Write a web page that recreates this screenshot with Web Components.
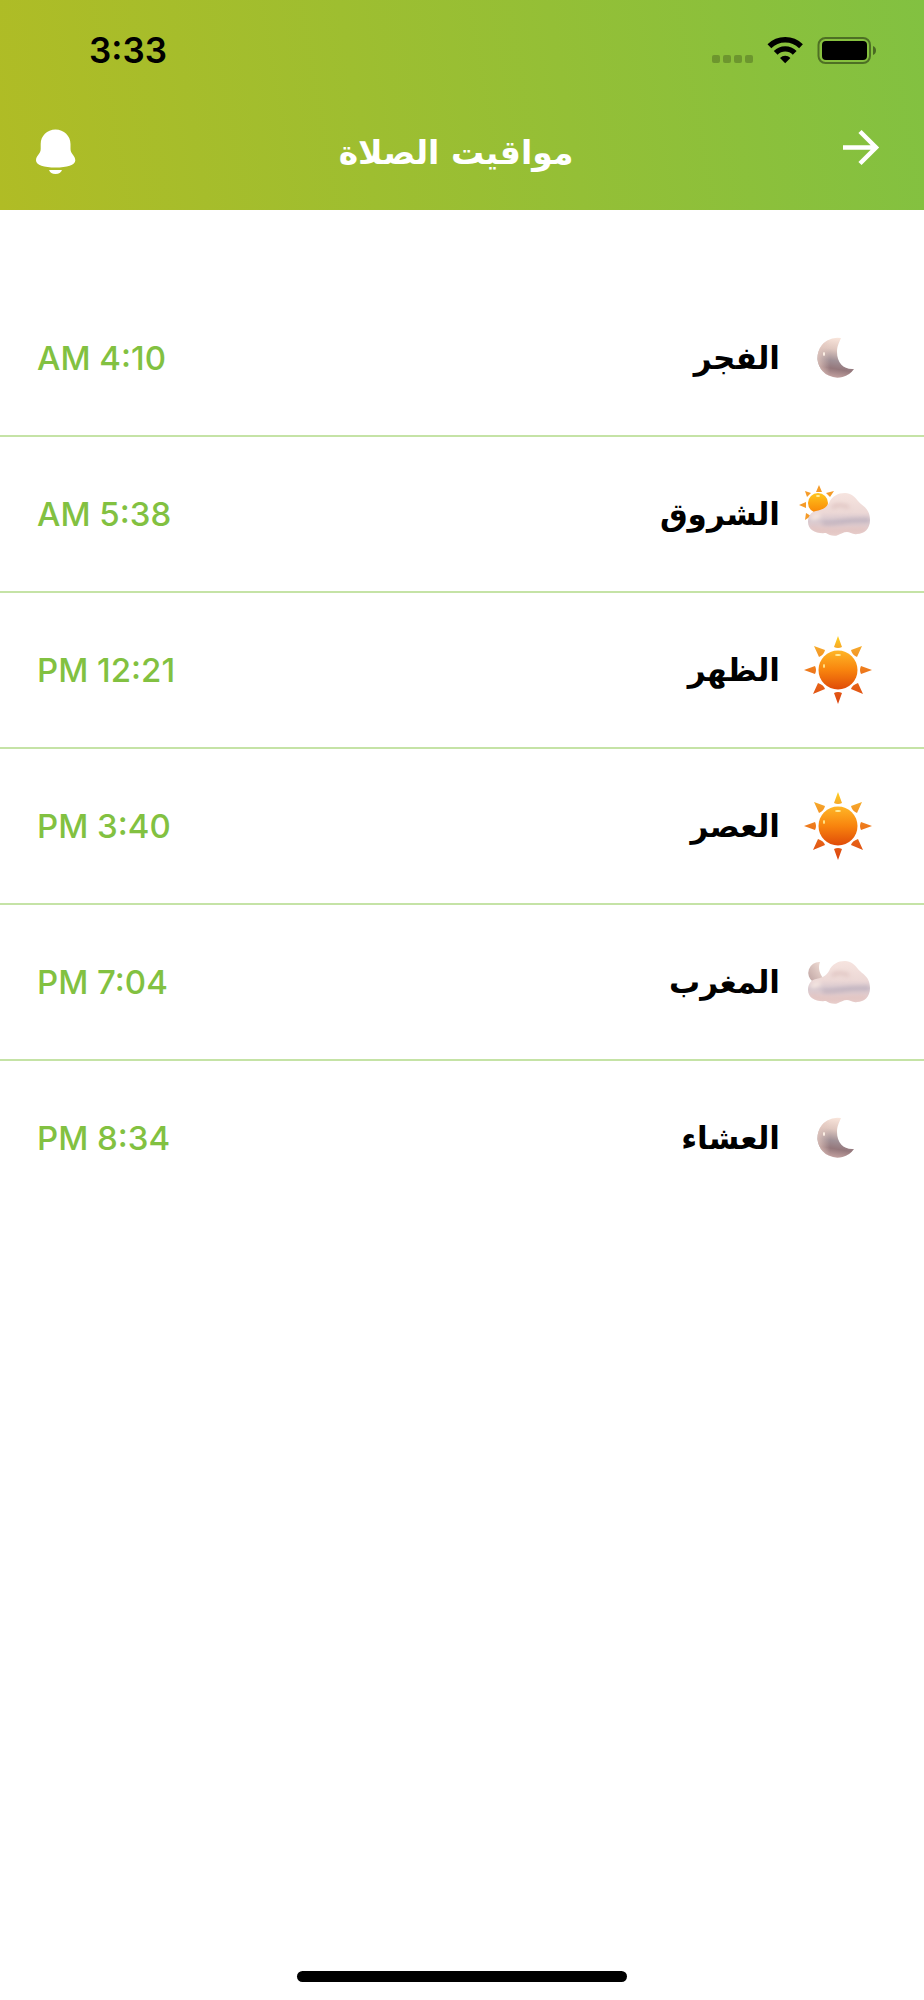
<!DOCTYPE html>
<html lang="ar" dir="rtl">
<head>
<meta charset="utf-8">
<meta name="viewport" content="width=device-width, initial-scale=1">
<title>مواقيت الصلاة</title>
<style>
  body {
    margin: 0;
    background: #fff;
    color: #000;
    font-family: "DejaVu Sans", sans-serif;
  }
</style>
</head>
<body>
<prayer-screen>
  <status-bar slot="header" time="3:33"></status-bar>
  <nav-header slot="header">مواقيت الصلاة</nav-header>
  <prayer-row icon="moon" time="AM 4:10">الفجر</prayer-row>
  <prayer-row icon="sunrise" time="AM 5:38">الشروق</prayer-row>
  <prayer-row icon="sun" time="PM 12:21">الظهر</prayer-row>
  <prayer-row icon="sun" time="PM 3:40">العصر</prayer-row>
  <prayer-row icon="dusk" time="PM 7:04">المغرب</prayer-row>
  <prayer-row icon="moon" time="PM 8:34">العشاء</prayer-row>
</prayer-screen>

<script>
const cloud = `
  <path fill="url(#cloud)" d="M10 48C10 42 13 38 18 37C24 36 28 34 31 29C34 22 40 19 47 19C53 19 57 23 60 27C64 32 72 34 72 46C72 55 66 60 59 60C55 61 52 58 49 58C45 58 43 60 40 61C36 63 31 61 28 59C18 60 10 56 10 48Z"/>
  <g clip-path="url(#cloud-clip)" fill="none" stroke-linecap="round" filter="url(#soft)">
    <path d="M35 33C39 30 46 31 50 33" stroke="#c9a5a2" stroke-width="3" opacity=".5"/>
    <path d="M26 49C36 51 44 45 70 46" stroke="#a99db0" stroke-width="4" opacity=".5"/>
    <path d="M14 54C24 60 52 56 66 56" stroke="#e0b9b6" stroke-width="4" opacity=".5"/>
    <path d="M15 44L20 42" stroke="#fff2ea" stroke-width="5" opacity=".7"/>
  </g>
`
const cloudDefs = `
  <linearGradient id="cloud" x1="0" y1="0" x2="0" y2="1">
    <stop offset="0" stop-color="#f6e4df"/>
    <stop offset=".45" stop-color="#ecd8d6"/>
    <stop offset=".65" stop-color="#d6c7ce"/>
    <stop offset=".82" stop-color="#e3cccc"/>
    <stop offset="1" stop-color="#e9d0cd"/>
  </linearGradient>
  <clipPath id="cloud-clip"><path d="M10 48C10 42 13 38 18 37C24 36 28 34 31 29C34 22 40 19 47 19C53 19 57 23 60 27C64 32 72 34 72 46C72 55 66 60 59 60C55 61 52 58 49 58C45 58 43 60 40 61C36 63 31 61 28 59C18 60 10 56 10 48Z"/></clipPath>
  <filter id="soft" filterUnits="userSpaceOnUse" x="0" y="0" width="80" height="80"><feGaussianBlur stdDeviation="2"/></filter>
`

const icons = {
  moon: `
    <defs>
      <linearGradient id="moon" x1=".6" y1="0" x2=".45" y2="1">
        <stop offset="0" stop-color="#fae6dc"/>
        <stop offset=".3" stop-color="#e0c8c0"/>
        <stop offset=".58" stop-color="#a09096"/>
        <stop offset=".78" stop-color="#94777b"/>
        <stop offset="1" stop-color="#c4a3a2"/>
      </linearGradient>
      <linearGradient id="rim" x1="0" x2="1">
        <stop offset="0" stop-color="#e5c9c0" stop-opacity=".8"/>
        <stop offset=".35" stop-color="#e5c9c0" stop-opacity="0"/>
      </linearGradient>
    </defs>
    <path fill="url(#moon)" d="M43 20A20 20 0 1 0 56 51C46 52 39 45 39 34C39 28 41 25 43 20Z"/>
    <path fill="url(#rim)" d="M43 20A20 20 0 1 0 56 51C46 52 39 45 39 34C39 28 41 25 43 20Z"/>
    <ellipse cx="26" cy="36" rx="1" ry="2" fill="#fff3e8"/>
  `,
  sun: `
    <defs>
      <linearGradient id="rays" gradientUnits="userSpaceOnUse" x1="0" y1="6" x2="0" y2="74">
        <stop offset="0" stop-color="#ffd21f"/>
        <stop offset=".2" stop-color="#f5a22a"/>
        <stop offset=".5" stop-color="#ee7a1c"/>
        <stop offset="1" stop-color="#dc4410"/>
      </linearGradient>
      <linearGradient id="disc" x1="0" y1="0" x2="0" y2="1">
        <stop offset="0" stop-color="#ffb626"/>
        <stop offset=".5" stop-color="#f8840e"/>
        <stop offset="1" stop-color="#e04b08"/>
      </linearGradient>
    </defs>
    <path fill="url(#rays)" d="M40 6L44 17Q40 19 36 17ZM40 74L36 63Q40 61 44 63ZM6 40L17 36Q19 40 17 44ZM74 40L63 44Q61 40 63 36ZM16 16L27 20Q26 25 21 27ZM64 16L59 27Q54 25 53 20ZM15 64L20 53Q26 55 27 59ZM65 64L53 59Q54 55 60 53Z"/>
    <circle cx="40" cy="40" r="19.500" fill="url(#disc)"/>
    <ellipse cx="40" cy="25" rx="3" ry="1" fill="#fff0a0"/>
    <ellipse cx="26" cy="36" rx="1" ry="2" fill="#ffe890"/>
  `,
  sunrise: `
    <defs>
      ${cloudDefs}
      <linearGradient id="small-sun" x1="0" y1="0" x2="0" y2="1">
        <stop offset="0" stop-color="#ffc61c"/>
        <stop offset="1" stop-color="#f98607"/>
      </linearGradient>
    </defs>
    <path fill="#f59b28" d="M21 11L24 18H18ZM36 17L32 23L28 19ZM7 17L13 19L9 23ZM1 31L8 28V34ZM7 46L8 39L13 42Z"/>
    <circle cx="20" cy="29" r="10" fill="url(#small-sun)"/>
    <ellipse cx="20" cy="22" rx="2" ry="1" fill="#fff0a0"/>
    ${cloud}
  `,
  dusk: `
    <defs>
      ${cloudDefs}
      <linearGradient id="small-moon" x1="1" y1="0" x2="0" y2="1">
        <stop offset="0" stop-color="#f5e2da"/>
        <stop offset="1" stop-color="#bda2a0"/>
      </linearGradient>
    </defs>
    <path fill="url(#small-moon)" d="M22 20A11 11 0 0 0 15 40L25 36C21 31 20 25 22 20Z"/>
    ${cloud}
  `
}

class PrayerScreen extends HTMLElement {
  constructor () {
    super()
    this.attachShadow({mode: 'open'}).innerHTML = `
      <style>
        :host {
          display: flex;
          flex-direction: column;
          min-height: 100vh;
        }
        header {
          padding-bottom: 10px;
          background: linear-gradient(80deg, #b0bc25, #82c141);
        }
        main {
          flex: 1;
          padding-top: 71px;
        }
        .indicator {
          align-self: center;
          width: 330px;
          height: 11px;
          margin-bottom: 18px;
          border-radius: 6px;
          background: #000;
        }
      </style>
      <header><slot name="header"></slot></header>
      <main role="list"><slot></slot></main>
      <div class="indicator"></div>
    `
  }
}

class StatusBar extends HTMLElement {
  constructor () {
    super()
    this.attachShadow({mode: 'open'}).innerHTML = `
      <style>
        :host {
          display: flex;
          justify-content: space-between;
          align-items: center;
          direction: ltr;
          height: 100px;
          padding: 0 46px 0 89px;
          font: 600 35px/44px Inter, sans-serif;
        }
        svg { display: block; }
      </style>
      <time>${this.getAttribute('time')}</time>
      <svg width="168" height="32" viewBox="0 0 168 32" aria-hidden="true">
        <g fill-opacity=".22">
          <rect x="2" y="21" width="8" height="8" rx="2"/>
          <rect x="13" y="21" width="8" height="8" rx="2"/>
          <rect x="24" y="21" width="8" height="8" rx="2"/>
          <rect x="35" y="21" width="8" height="8" rx="2"/>
        </g>
        <g fill="none" stroke="#000" stroke-width="5.4">
          <path d="M59.4 12.2A22.6 22.6 0 0 1 91 12.2"/>
          <path d="M65.7 18.8A13.5 13.5 0 0 1 84.7 18.8"/>
        </g>
        <path d="M70 24A7.4 7.4 0 0 1 80.4 24L75.2 29.2Z"/>
        <rect x="108.5" y="4" width="51.5" height="25" rx="7" fill="none" stroke="#000" stroke-opacity=".42" stroke-width="2"/>
        <rect x="112" y="7" width="45" height="19" rx="4"/>
        <path fill-opacity=".45" d="M163 12C167 13.5 167 19.5 163 21Z"/>
      </svg>
    `
  }
}

class NavHeader extends HTMLElement {
  constructor () {
    super()
    this.attachShadow({mode: 'open'}).innerHTML = `
      <style>
        :host {
          display: flex;
          justify-content: space-between;
          align-items: center;
          height: 100px;
          padding: 0 36px;
          color: #fff;
        }
        h1 {
          flex: 1;
          margin: 0;
          padding-top: 6px;
          font-size: 33px;
          font-weight: 700;
          line-height: 48px;
          text-align: center;
        }
        button {
          width: 48px;
          padding: 0;
          border: 0;
          background: none;
          color: inherit;
          cursor: pointer;
        }
        .back { width: 60px; }
        svg { display: block; }
      </style>
      <button class="back" type="button" aria-label="رجوع">
        <svg width="48" height="48" viewBox="0 0 48 48" fill="none" stroke="currentColor" stroke-width="4.5">
          <path d="M3 21.5H36M20 5.5L36 21.5L20 37.5"/>
        </svg>
      </button>
      <h1><slot></slot></h1>
      <button type="button" aria-label="التنبيهات">
        <svg width="48" height="48" viewBox="0 0 48 48" fill="currentColor">
          <path d="M19.5 3.5C11 3.5 4.7 10 4.7 18V23C4.7 28 0 29.500 0 34.5C0 39 8 41.5 19.5 41.5S39.3 39 39.3 34.5C39.3 29.5 34.5 28 34.5 23V18C34.5 10 28 3.5 19.5 3.5Z"/>
          <path d="M13 44H26C25 46.5 23 48 19.5 48S14 46.5 13 44Z"/>
        </svg>
      </button>
    `
  }
}

class PrayerRow extends HTMLElement {
  constructor () {
    super()
    this.attachShadow({mode: 'open'}).innerHTML = `
      <style>
        :host {
          display: flex;
          align-items: center;
          gap: 18px;
          box-sizing: border-box;
          height: 156px;
          padding: 0 46px 0 37px;
          border-bottom: 2px solid #c5e3a6;
        }
        :host(:last-of-type) { border-bottom-color: transparent; }
        svg { flex: none; }
        .name {
          flex: 1;
          font-size: 31px;
          font-weight: 700;
          line-height: 48px;
        }
        time {
          direction: ltr;
          color: #82c141;
          font: 500 33px/48px Inter, sans-serif;
        }
      </style>
      <svg width="80" height="80" viewBox="0 0 80 80" aria-hidden="true">${icons[this.getAttribute('icon')]}</svg>
      <span class="name"><slot></slot></span>
      <time>${this.getAttribute('time')}</time>
    `
    this.setAttribute('role', 'listitem')
  }
}

window.customElements.define('prayer-screen', PrayerScreen)
window.customElements.define('status-bar', StatusBar)
window.customElements.define('nav-header', NavHeader)
window.customElements.define('prayer-row', PrayerRow)
</script>
</body>
</html>
